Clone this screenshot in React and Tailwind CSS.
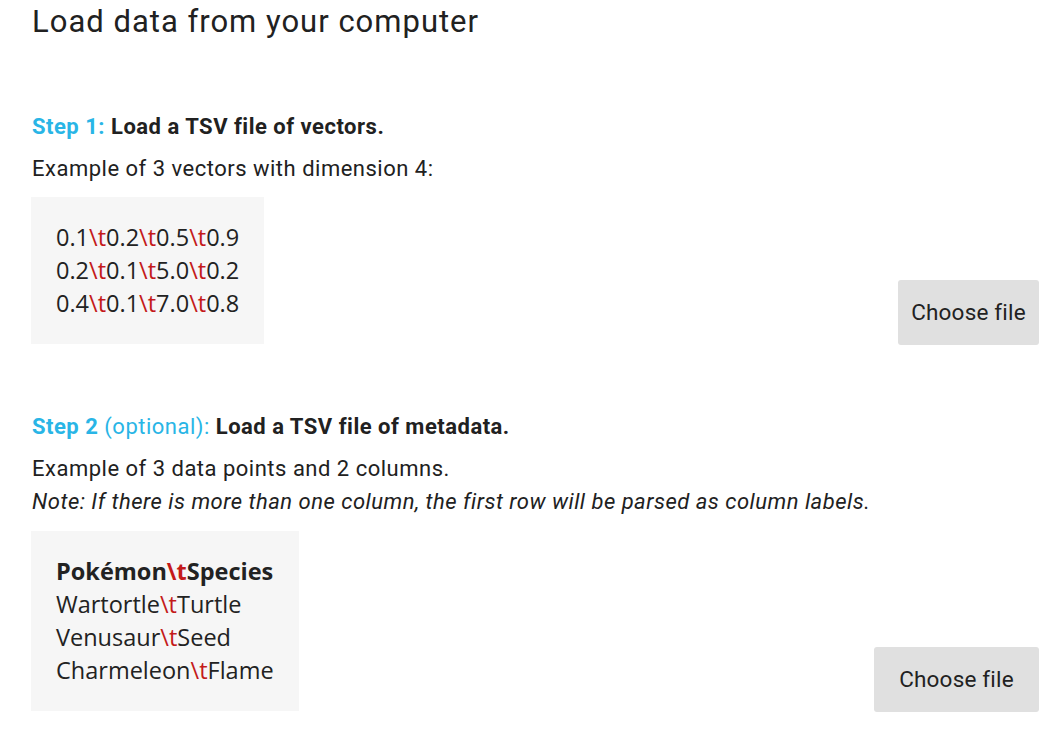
const TAB = <span className="text-[#c41a1a]">\t</span>;

function Row({ cells, bold }) {
	return (
		<div className={bold ? "font-bold" : ""}>
			{cells.map((c, i) => (
				<span key={i}>
					{i > 0 && TAB}
					{c}
				</span>
			))}
		</div>
	);
}

function CodeBlock({ rows, boldFirst }) {
	return (
		<div className="bg-[#f6f6f6] px-[25px] py-6 text-[23.5px] leading-[33px] text-[#222] font-['Open_Sans',sans-serif]">
			{rows.map((r, i) => (
				<Row key={i} cells={r} bold={boldFirst && i === 0} />
			))}
		</div>
	);
}

function ChooseButton({ width }) {
	return (
		<button className={`${width} h-[65px] mb-[-1px] bg-[#e0e0e0] rounded-[3px] text-[22.5px] tracking-[0.2px] text-[#222] shrink-0`}>
			Choose file
		</button>
	);
}

export default function App() {
	return (
		<div className="bg-white w-[1060px] h-[738px] overflow-hidden pt-px pl-[31px] pr-[21px] font-['Roboto',sans-serif] text-[#212121]">
			{/* Title */}
			<h1 className="text-[31px] tracking-[1px] leading-[42px] pl-px">Load data from your computer</h1>

			{/* Step 1 */}
			<div className="mt-[72px] text-[22px] tracking-[0.5px] leading-6 pl-px">
				<span className="font-bold text-[#29b5e6]">Step 1: </span>
				<span className="font-bold">Load a TSV file of vectors.</span>
			</div>
			<div className="mt-[13px] text-[22px] tracking-[0.5px] leading-[33px] pl-px">Example of 3 vectors with dimension 4:</div>
			<div className="mt-[12px] flex items-end justify-between">
				<CodeBlock
					rows={[
						["0.1", "0.2", "0.5", "0.9"],
						["0.2", "0.1", "5.0", "0.2"],
						["0.4", "0.1", "7.0", "0.8"],
					]}
				/>
				<ChooseButton width="w-[141px]" />
			</div>

			{/* Step 2 */}
			<div className="mt-[71px] text-[22px] tracking-[0.5px] leading-6 pl-px">
				<span className="font-bold text-[#29b5e6]">Step 2 </span>
				<span className="text-[#29b5e6]">(optional): </span>
				<span className="font-bold">Load a TSV file of metadata.</span>
			</div>
			<div className="mt-[13px] text-[22px] tracking-[0.5px] leading-[33px] pl-px">
				<div>Example of 3 data points and 2 columns.</div>
				<div className="italic">Note: If there is more than one column, the first row will be parsed as column labels.</div>
			</div>
			<div className="mt-[13px] flex items-end justify-between">
				<CodeBlock
					boldFirst
					rows={[
						["Pokémon", "Species"],
						["Wartortle", "Turtle"],
						["Venusaur", "Seed"],
						["Charmeleon", "Flame"],
					]}
				/>
				<ChooseButton width="w-[165px]" />
			</div>
		</div>
	);
}
